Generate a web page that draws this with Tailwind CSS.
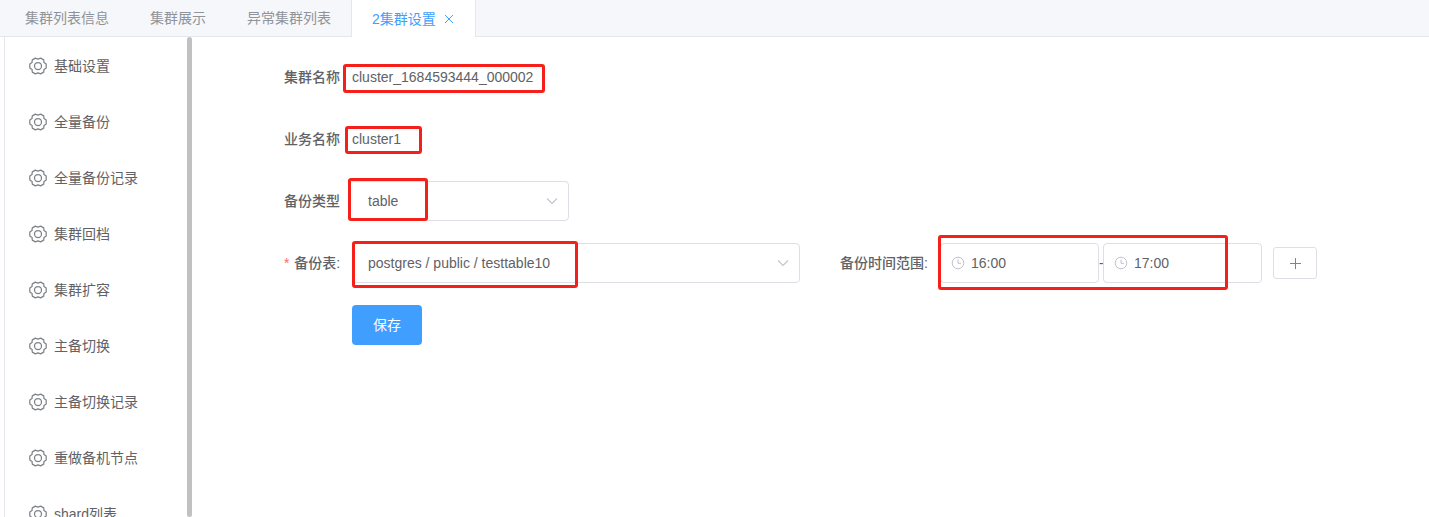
<!DOCTYPE html>
<html>
<head>
<meta charset="utf-8">
<script src="https://cdn.jsdelivr.net/npm/@tailwindcss/browser@4"></script>
</head>
<body class="h-[517px] w-[1429px] overflow-hidden bg-white font-['Liberation_Sans','Noto_Sans_CJK_SC',sans-serif] text-sm text-[#606266]">
<svg class="hidden"><defs>
<symbol id="gear" viewBox="0 0 18 18"><path d="M17.2 10.9 L15 12.4 L14.7 15.1 L11.6 16.9 L9 15.8 L6.4 16.9 L3.3 15.1 L3 12.4 L.8 10.9 V7.1 L3 5.6 L3.3 2.9 L6.4 1.1 L9 2.2 L11.6 1.1 L14.7 2.9 L15 5.6 L17.2 7.1 Z" fill="none" stroke="#7f8388" stroke-width="1.25" stroke-linejoin="round"/><circle cx="9" cy="9" r="3.5" fill="none" stroke="#7f8388" stroke-width="1.25"/></symbol>
<symbol id="clock" viewBox="0 0 14 14"><circle cx="7" cy="7" r="5.8" fill="none" stroke="#c0c4cc" stroke-width="1"/><path d="M7 3.5V7.3H10" fill="none" stroke="#c0c4cc" stroke-width="1"/></symbol>
<symbol id="chev" viewBox="0 0 12 8"><path d="M1 1.5 L6 6.5 L11 1.5" fill="none" stroke="#c0c4cc" stroke-width="1.1"/></symbol>
</defs></svg>

<div class="flex h-[37px] border-b border-[#e4e7ed] bg-[#f5f7fa] pl-[5px]">
  <div class="flex h-9 items-center px-5 text-[#909399]">集群列表信息</div>
  <div class="ml-px flex h-9 items-center px-5 text-[#909399]">集群展示</div>
  <div class="ml-px flex h-9 items-center px-5 text-[#909399]">异常集群列表</div>
  <div class="flex h-[37px] w-[125px] items-center border-x border-[#e4e7ed] bg-white pl-5 text-[#409eff]">
    <span>2集群设置</span>
    <svg class="ml-[8px] h-[10px] w-[10px]" viewBox="0 0 10 10"><path d="M1 1L9 9M9 1L1 9" stroke="#409eff" stroke-width="1"/></svg>
  </div>
</div>

<div class="flex h-[480px] overflow-hidden pl-1">
  <nav class="h-[480px] w-[183px] shrink-0 overflow-hidden border-l border-[#e4e7ed] pt-px text-[#606266]">
    <div class="flex h-14 items-center gap-2 pl-6"><svg class="h-[18px] w-[18px] shrink-0"><use href="#gear"/></svg><span class="ml-[-1px]">基础设置</span></div>
    <div class="flex h-14 items-center gap-2 pl-6"><svg class="h-[18px] w-[18px] shrink-0"><use href="#gear"/></svg><span class="ml-[-1px]">全量备份</span></div>
    <div class="flex h-14 items-center gap-2 pl-6"><svg class="h-[18px] w-[18px] shrink-0"><use href="#gear"/></svg><span class="ml-[-1px]">全量备份记录</span></div>
    <div class="flex h-14 items-center gap-2 pl-6"><svg class="h-[18px] w-[18px] shrink-0"><use href="#gear"/></svg><span class="ml-[-1px]">集群回档</span></div>
    <div class="flex h-14 items-center gap-2 pl-6"><svg class="h-[18px] w-[18px] shrink-0"><use href="#gear"/></svg><span class="ml-[-1px]">集群扩容</span></div>
    <div class="flex h-14 items-center gap-2 pl-6"><svg class="h-[18px] w-[18px] shrink-0"><use href="#gear"/></svg><span class="ml-[-1px]">主备切换</span></div>
    <div class="flex h-14 items-center gap-2 pl-6"><svg class="h-[18px] w-[18px] shrink-0"><use href="#gear"/></svg><span class="ml-[-1px]">主备切换记录</span></div>
    <div class="flex h-14 items-center gap-2 pl-6"><svg class="h-[18px] w-[18px] shrink-0"><use href="#gear"/></svg><span class="ml-[-1px]">重做备机节点</span></div>
    <div class="flex h-14 items-center gap-2 pl-6"><svg class="h-[18px] w-[18px] shrink-0"><use href="#gear"/></svg><span class="ml-[-1px]">shard列表</span></div>
  </nav>
  <div class="h-[480px] w-[5px] shrink-0 rounded-[3px] bg-[#c1c1c1]"></div>

  <main class="flex flex-1 flex-col gap-[22px] pl-[92px] pt-5">
    <div class="flex h-10 items-center">
      <label class="w-14 text-right font-medium">集群名称</label>
      <span class="ml-3">cluster_1684593444_000002</span>
    </div>
    <div class="flex h-10 items-center">
      <label class="w-14 text-right font-medium">业务名称</label>
      <span class="ml-3">cluster1</span>
    </div>
    <div class="flex h-10 items-center">
      <label class="w-14 text-right font-medium">备份类型</label>
      <div class="ml-[9px] flex h-10 w-[220px] items-center justify-between rounded border border-[#dcdfe6] pl-[18px] pr-[10px]">
        <span>table</span><svg class="h-2 w-3"><use href="#chev"/></svg>
      </div>
    </div>
    <div class="flex h-10 items-center">
      <label class="w-14 whitespace-nowrap text-right font-medium"><span class="mr-px text-[#f56c6c]">*</span> 备份表:</label>
      <div class="ml-3 flex h-10 w-[448px] items-center justify-between rounded border border-[#dcdfe6] pl-[15px] pr-[10px]">
        <span>postgres / public / testtable10</span><svg class="h-2 w-3"><use href="#chev"/></svg>
      </div>
      <label class="ml-10 w-[88px] whitespace-nowrap font-medium">备份时间范围:</label>
      <div class="ml-3 flex h-10 w-[159px] items-center rounded border border-[#dcdfe6] pl-[10px]">
        <svg class="h-[14px] w-[14px]"><use href="#clock"/></svg><span class="ml-[6px]">16:00</span>
      </div>
      <span class="w-1 text-center leading-none">-</span>
      <div class="flex h-10 w-[159px] items-center rounded border border-[#dcdfe6] pl-[10px]">
        <svg class="h-[14px] w-[14px]"><use href="#clock"/></svg><span class="ml-[6px]">17:00</span>
      </div>
      <button class="ml-[11px] flex h-8 w-11 items-center justify-center rounded-[3px] border border-[#dcdfe6]">
        <svg class="h-[11px] w-[11px]" viewBox="0 0 11 11"><path d="M5.5 0V11M0 5.5H11" stroke="#808388" stroke-width="1"/></svg>
      </button>
    </div>
    <div class="pl-[68px]">
      <button class="h-10 w-[70px] rounded bg-[#409eff] text-white">保存</button>
    </div>
  </main>
</div>

<div class="absolute left-[343px] top-[64px] h-[29px] w-[202px] rounded-[3px] border-[3px] border-[#f5201a]"></div>
<div class="absolute left-[345px] top-[126px] h-[28px] w-[77px] rounded-[3px] border-[3px] border-[#f5201a]"></div>
<div class="absolute left-[348px] top-[178px] h-[43px] w-[80px] rounded-[3px] border-[3px] border-[#f5201a]"></div>
<div class="absolute left-[352px] top-[241px] h-[47px] w-[226px] rounded-[3px] border-[3px] border-[#f5201a]"></div>
<div class="absolute left-[938px] top-[235px] h-[55px] w-[290px] rounded-[3px] border-[3px] border-[#f5201a]"></div>
</body>
</html>
